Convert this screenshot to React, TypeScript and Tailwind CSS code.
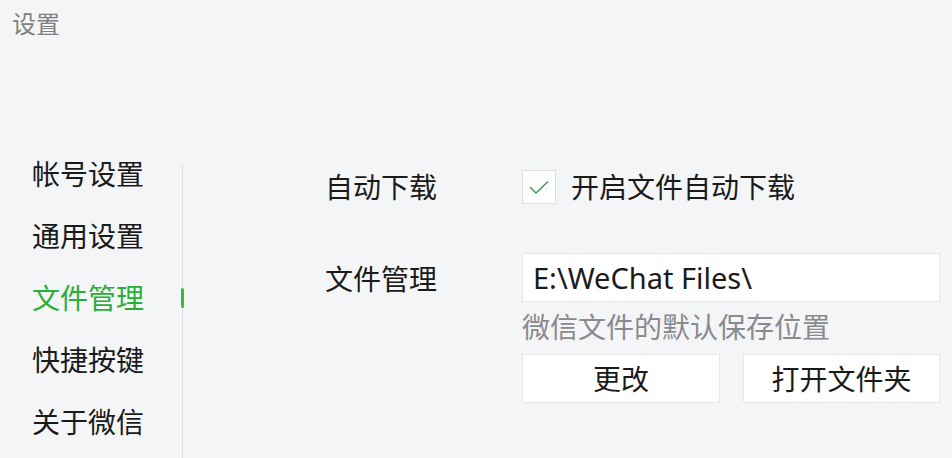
import React, { useState } from 'react';

const NAV_ITEMS = ['帐号设置', '通用设置', '文件管理', '快捷按键', '关于微信'];

const font = { fontFamily: '"Noto Sans", "Noto Sans CJK SC", sans-serif' };

export default function App() {
  const [active, setActive] = useState<string>('文件管理');
  const [autoDownload, setAutoDownload] = useState<boolean>(true);

  return (
    <div
      className="w-[952px] h-[458px] overflow-hidden bg-[#f4f5f7] text-[#1a1a1a] flex flex-col"
      style={font}
    >
      {/* title */}
      <div className="h-[48px] pl-[12px] pt-[6px] text-[24px] leading-[36px] text-[#808080]">设置</div>

      <div className="flex flex-1 pt-[121px]">
        {/* sidebar */}
        <div className="w-[183px] border-r border-[#e2e3e6]">
          <div className="flex flex-col -mt-[8px]">
            {NAV_ITEMS.map((item) => (
              <button
                key={item}
                onClick={() => setActive(item)}
                className={`relative h-[62px] pl-[32px] text-left text-[28px] leading-[38px] flex items-start ${
                  item === active ? 'text-[#2aae35]' : 'text-[#1a1a1a]'
                }`}
              >
                {item}
                {item === active && (
                  <span className="absolute right-[-2px] top-[9px] w-[3px] h-[20px] bg-[#2dbf3d] rounded-sm" />
                )}
              </button>
            ))}
          </div>
        </div>

        {/* content */}
        <div className="flex-1 pl-[142px] pr-[12px]">
          <div className="flex items-center h-[36px] mt-[6px]">
            <div className="w-[197px] text-[28px]">自动下载</div>
            <button
              onClick={() => setAutoDownload(!autoDownload)}
              className="w-[34px] h-[34px] bg-white border border-[#dcdde0] flex items-center justify-center"
            >
              {autoDownload && (
                <svg width="22" height="16" viewBox="0 0 22 16" fill="none">
                  <path d="M2 8 L8 14 L20 2.5" stroke="#3a9a4a" strokeWidth="1.4" />
                </svg>
              )}
            </button>
            <span className="ml-[15px] text-[28px]">开启文件自动下载</span>
          </div>

          <div className="flex mt-[48px]">
            <div className="w-[197px] text-[28px] leading-[36px] pt-[8px]">文件管理</div>
            <div className="flex flex-col w-[418px]">
              <div className="h-[49px] bg-white border border-[#e6e7ea] px-[10px] flex items-center text-[29px]">
                E:\WeChat Files\
              </div>
              <div className="mt-[6px] text-[#8a8a8e] text-[28px] leading-[38px]">微信文件的默认保存位置</div>
              <div className="flex gap-[23px] mt-[8px]">
                <button className="w-[198px] h-[49px] bg-white border border-[#e6e7ea] text-[28px]">更改</button>
                <button className="w-[197px] h-[49px] bg-white border border-[#e6e7ea] text-[28px]">打开文件夹</button>
              </div>
            </div>
          </div>
        </div>
      </div>
    </div>
  );
}
